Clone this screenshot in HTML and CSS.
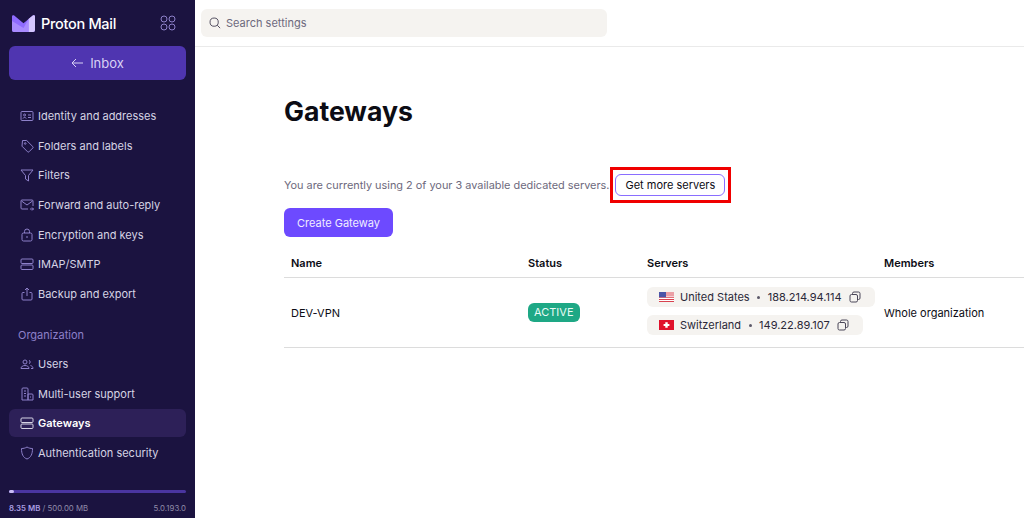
FILE: index.html
```html
<!DOCTYPE html>
<html lang="en">
<head>
    <meta charset="UTF-8">
    <meta name="viewport" content="width=device-width, initial-scale=1.0">
    <title>Gateways - Proton Mail</title>
    <link rel="stylesheet" href="styles.css">
</head>
<body>
    <aside class="sidebar">
        <div class="brand">
            <svg class="brand-logo" viewBox="0 0 23 17" width="23" height="17">
                <path d="M0 1.500C0 .3 1.300-.3 2.200 .5L11.500 8.300 20.800 .5C21.700-.3 23 .3 23 1.500V15a2 2 0 0 1-2 2H2a2 2 0 0 1-2-2Z" fill="#8f6bff"/>
                <path d="M16.500 4.100 20.800 .5C21.700-.3 23 .3 23 1.500V15a2 2 0 0 1-2 2H16.500Z" fill="#d4c6ff"/>
                <path d="M0 6 11.500 13 16.500 4.100V17H2a2 2 0 0 1-2-2Z" fill="#a98bff"/>
            </svg>
            <span class="brand-name">Proton Mail</span>
            <svg class="brand-apps" viewBox="0 0 16 16" width="16" height="16" fill="none" stroke="#8d80c9" stroke-width="1">
                <circle cx="4" cy="4" r="3"/><circle cx="12" cy="4" r="3"/><circle cx="4" cy="12" r="3"/><circle cx="12" cy="12" r="3"/>
            </svg>
        </div>

        <button class="inbox-button">
            <svg viewBox="0 0 12 10" width="12" height="10" fill="none" stroke="currentColor" stroke-width="1"><path d="M12 5H1M5 1 1 5l4 4"/></svg>
            Inbox
        </button>

        <nav class="nav">
            <a class="nav-item">
                <svg viewBox="0 0 14 14" width="14" height="14"><rect x="1" y="2.500" width="12" height="9" rx="1"/><circle cx="4.600" cy="6" r="1"/><path d="M3 9.500c.4-1.400 2.800-1.400 3.200 0M8 6h3M8 8.500h3"/></svg>
                Identity and addresses
            </a>
            <a class="nav-item">
                <svg viewBox="0 0 14 14" width="14" height="14"><path d="M2.500 1.500h4.200L12.800 7.600a1 1 0 0 1 0 1.400L9 12.800a1 1 0 0 1-1.400 0L2 7.200Z"/><circle cx="5.200" cy="4.500" r=".8"/></svg>
                Folders and labels
            </a>
            <a class="nav-item">
                <svg viewBox="0 0 14 14" width="14" height="14"><path d="M1 2h12L8.500 7.500V13l-3-2V7.500Z"/></svg>
                Filters
            </a>
            <a class="nav-item">
                <svg viewBox="0 0 14 14" width="14" height="14"><path d="M8 11H2a1 1 0 0 1-1-1V3a1 1 0 0 1 1-1h10a1 1 0 0 1 1 1v5M1.500 3 7 7l5.500-4M10 11h3.500M12 9.500l1.500 1.500-1.500 1.500"/></svg>
                Forward and auto-reply
            </a>
            <a class="nav-item">
                <svg viewBox="0 0 14 14" width="14" height="14"><rect x="2" y="5" width="10" height="8" rx="1.500"/><path d="M4.500 5V3.500a2.500 2.500 0 0 1 5 0V5M7 8v2"/></svg>
                Encryption and keys
            </a>
            <a class="nav-item">
                <svg viewBox="0 0 14 14" width="14" height="14"><rect x="1" y="2" width="12" height="4.500" rx="1"/><rect x="1" y="8" width="12" height="4.500" rx="1"/></svg>
                IMAP/SMTP
            </a>
            <a class="nav-item">
                <svg viewBox="0 0 14 14" width="14" height="14"><path d="M4.500 5.500H3a1 1 0 0 0-1 1V12a1 1 0 0 0 1 1h8a1 1 0 0 0 1-1V6.500a1 1 0 0 0-1-1H9.500M7 9V1M5 3l2-2 2 2"/></svg>
                Backup and export
            </a>

            <div class="nav-heading">Organization</div>

            <a class="nav-item">
                <svg viewBox="0 0 14 14" width="14" height="14"><circle cx="5" cy="5" r="2"/><path d="M1 11.500c0-4 8-4 8 0ZM9 3.200a2 2 0 0 1 0 3.600M10.500 8.500c1.500.4 2.500 1.400 2.500 3h-2"/></svg>
                Users
            </a>
            <a class="nav-item">
                <svg viewBox="0 0 14 14" width="14" height="14"><path d="M2 13V2a1 1 0 0 1 1-1h4a1 1 0 0 1 1 1v11ZM8 7h4a1 1 0 0 1 1 1v5H8ZM4 4h2M4 6.500h2M4 9h2M10 10h1"/></svg>
                Multi-user support
            </a>
            <a class="nav-item nav-item-active">
                <svg viewBox="0 0 14 14" width="14" height="14"><rect x="1" y="2" width="12" height="4.500" rx="1"/><rect x="1" y="8" width="12" height="4.500" rx="1"/></svg>
                Gateways
            </a>
            <a class="nav-item">
                <svg viewBox="0 0 14 14" width="14" height="14"><path d="M7 1c2 1.200 3.500 1.500 5.500 1.500C12.500 8 11 11.500 7 13 3 11.500 1.500 8 1.500 2.500 3.500 2.500 5 2.200 7 1Z"/></svg>
                Authentication security
            </a>
        </nav>

        <div class="storage">
            <div class="storage-bar"><div class="storage-used" style="width: 3%"></div></div>
            <div class="storage-info">
                <span><strong>8.35 MB</strong> / 500.00 MB</span>
                <span>5.0.193.0</span>
            </div>
        </div>
    </aside>

    <div class="main">
        <header class="topbar">
            <div class="search">
                <svg viewBox="0 0 14 14" width="12" height="12" fill="none" stroke="#4a4658" stroke-width="1.100"><circle cx="6" cy="6" r="4.800"/><path d="m9.600 9.600 3.400 3.400"/></svg>
                <span>Search settings</span>
            </div>
        </header>

        <main class="content">
            <h1>Gateways</h1>

            <div class="usage">
                <span>You are currently using 2 of your 3 available dedicated servers.</span>
                <span class="highlight"><button class="more-button">Get more servers</button></span>
            </div>

            <button class="create-button">Create Gateway</button>

            <div class="table">
                <div class="table-row table-head">
                    <div>Name</div>
                    <div>Status</div>
                    <div>Servers</div>
                    <div>Members</div>
                </div>
                <div class="table-row table-body">
                    <div>DEV-VPN</div>
                    <div><span class="badge">ACTIVE</span></div>
                    <div class="servers">
                        <div class="server">
                            <svg class="flag" viewBox="0 0 15 10" width="15" height="10">
                                <rect width="15" height="10" fill="#fff"/>
                                <path d="M0 .4h15v1H0ZM0 2.600h15v1H0ZM0 4.800h15v1H0ZM0 7h15v1H0ZM0 9h15v1H0Z" fill="#d8424f"/>
                                <rect width="7" height="5.300" fill="#4a55a8"/>
                            </svg>
                            United States
                            <i class="dot"></i>
                            188.214.94.114
                            <svg class="copy" viewBox="0 0 12 12" width="12" height="12"><rect x="1" y="3.500" width="7.500" height="7.500" rx="1.500"/><path d="M3.500 3.500V2.500A1.500 1.500 0 0 1 5 1h4.500A1.500 1.500 0 0 1 11 2.500V7a1.500 1.500 0 0 1-1.500 1.500h-1"/></svg>
                        </div>
                        <div class="server">
                            <svg class="flag" viewBox="0 0 15 10" width="15" height="10">
                                <rect width="15" height="10" fill="#e0112b"/>
                                <path d="M6.300 2.200h2.400v1.700h1.700v2.200H8.700v1.700H6.300V6.100H4.600V3.900h1.700Z" fill="#fff"/>
                            </svg>
                            Switzerland
                            <i class="dot"></i>
                            149.22.89.107
                            <svg class="copy" viewBox="0 0 12 12" width="12" height="12"><rect x="1" y="3.500" width="7.500" height="7.500" rx="1.500"/><path d="M3.500 3.500V2.500A1.500 1.500 0 0 1 5 1h4.500A1.500 1.500 0 0 1 11 2.500V7a1.500 1.500 0 0 1-1.500 1.500h-1"/></svg>
                        </div>
                    </div>
                    <div>Whole organization</div>
                </div>
            </div>
        </main>
    </div>
</body>
</html>
```

FILE: styles.css
```css
* {
    box-sizing: border-box;
}

html, body {
    height: 100%;
}

body {
    font-family: Inter, "Liberation Sans", sans-serif;
    margin: 0;
    display: flex;
    overflow: hidden;
    background: white;
    color: #0c0c14;
    font-size: 12px;
}

/* Sidebar */
.sidebar {
    width: 195px;
    height: 518px;
    flex-shrink: 0;
    padding: 11px 9px 0;
    display: flex;
    flex-direction: column;
    background: #1b1340;
    color: #d6d3e4;
}

.brand {
    display: flex;
    align-items: center;
    height: 24px;
    padding: 0 10px 0 3px;
}

.brand-name {
    margin-left: 6px;
    font-size: 14.500px;
    font-weight: 500;
    letter-spacing: -0.3px;
    color: white;
}

.brand-apps {
    margin-left: auto;
}

.inbox-button {
    display: flex;
    align-items: center;
    justify-content: center;
    gap: 7px;
    height: 34px;
    margin-top: 11px;
    border: none;
    border-radius: 6px;
    background: #4f35b0;
    color: #d9d2f5;
    font-family: inherit;
    font-size: 13px;
}

.nav {
    display: flex;
    flex-direction: column;
    margin-top: 22px;
}

.nav-item {
    display: flex;
    align-items: center;
    gap: 4px;
    height: 28px;
    margin-bottom: 1.700px;
    padding-left: 11px;
    border-radius: 6px;
    font-size: 11px;
}

.nav-item svg {
    flex-shrink: 0;
    fill: none;
    stroke: #8d80c9;
    stroke-width: 1;
}

.nav-item-active {
    background: #2d2058;
    color: white;
    font-weight: 600;
}

.nav-item-active svg {
    stroke: #d6d3e4;
}

.nav-heading {
    padding: 18px 0 0 9px;
    height: 40px;
    color: #8d80c9;
    font-size: 11px;
}

.storage {
    margin-top: auto;
    padding-bottom: 5px;
}

.storage-bar {
    height: 3px;
    border-radius: 2px;
    background: #4a35a0;
}

.storage-used {
    height: 100%;
    border-radius: 2px;
    background: #c9bdf5;
}

.storage-info {
    display: flex;
    justify-content: space-between;
    margin-top: 10px;
    font-size: 7.800px;
    color: #8f8ba8;
}

.storage-info strong {
    color: #a99de0;
    font-weight: 600;
}

/* Main area */
.main {
    flex: 1;
    min-width: 0;
}

.topbar {
    height: 47px;
    padding: 9px 6px;
    border-bottom: 1px solid #eaeaea;
}

.search {
    display: flex;
    align-items: center;
    gap: 5px;
    width: 406px;
    height: 28px;
    padding-left: 8px;
    border-radius: 6px;
    background: #f5f3f0;
    color: #6d697d;
    font-size: 11px;
}

.content {
    padding: 47px 0 0 89px;
}

h1 {
    margin: 0;
    font-size: 26.600px;
    line-height: 34px;
    font-weight: 700;
}

.usage {
    display: flex;
    align-items: center;
    margin-top: 39px;
    color: #6d697d;
    font-size: 10.900px;
}

.highlight {
    display: inline-flex;
    margin-left: 1px;
    padding: 4px 3px 4px 2px;
    border: 3px solid #f00000;
}

.more-button {
    height: 22px;
    padding: 0 9px;
    border: 1px solid #8a6eff;
    border-radius: 6px;
    background: white;
    color: #0c0c14;
    font-family: inherit;
    font-size: 11px;
}

.create-button {
    display: block;
    height: 29px;
    margin-top: 5px;
    padding: 0 13px;
    border: none;
    border-radius: 6px;
    background: #6d4aff;
    color: #f0ecff;
    font-family: inherit;
    font-size: 11px;
}

.table {
    margin-top: 12px;
    width: 740px;
}

.table-row {
    display: grid;
    grid-template-columns: 237px 119px 237px 1fr;
    align-items: center;
    padding-left: 7px;
    border-bottom: 1px solid #dcdcdc;
}

.table-head {
    height: 29px;
    font-weight: 600;
    font-size: 11px;
}

.table-body {
    height: 70px;
    font-size: 11px;
}

.badge {
    display: inline-block;
    padding: 2px 6px;
    border-radius: 6px;
    background: #1ea885;
    color: #e8fbf5;
    font-size: 11px;
    line-height: 15px;
}

.servers {
    display: flex;
    flex-direction: column;
    align-items: flex-start;
    gap: 8px;
    padding-bottom: 3px;
}

.server {
    display: flex;
    align-items: center;
    height: 20px;
    padding: 0 14px 0 12px;
    border-radius: 6px;
    background: #f5f3f0;
    color: #2a2838;
}

.flag {
    margin-right: 6px;
}

.dot {
    width: 3px;
    height: 3px;
    margin: 0 7.500px;
    border-radius: 50%;
    background: #5c5868;
}

.copy {
    margin-left: 7px;
    fill: none;
    stroke: #4a4658;
    stroke-width: 1;
}
```
